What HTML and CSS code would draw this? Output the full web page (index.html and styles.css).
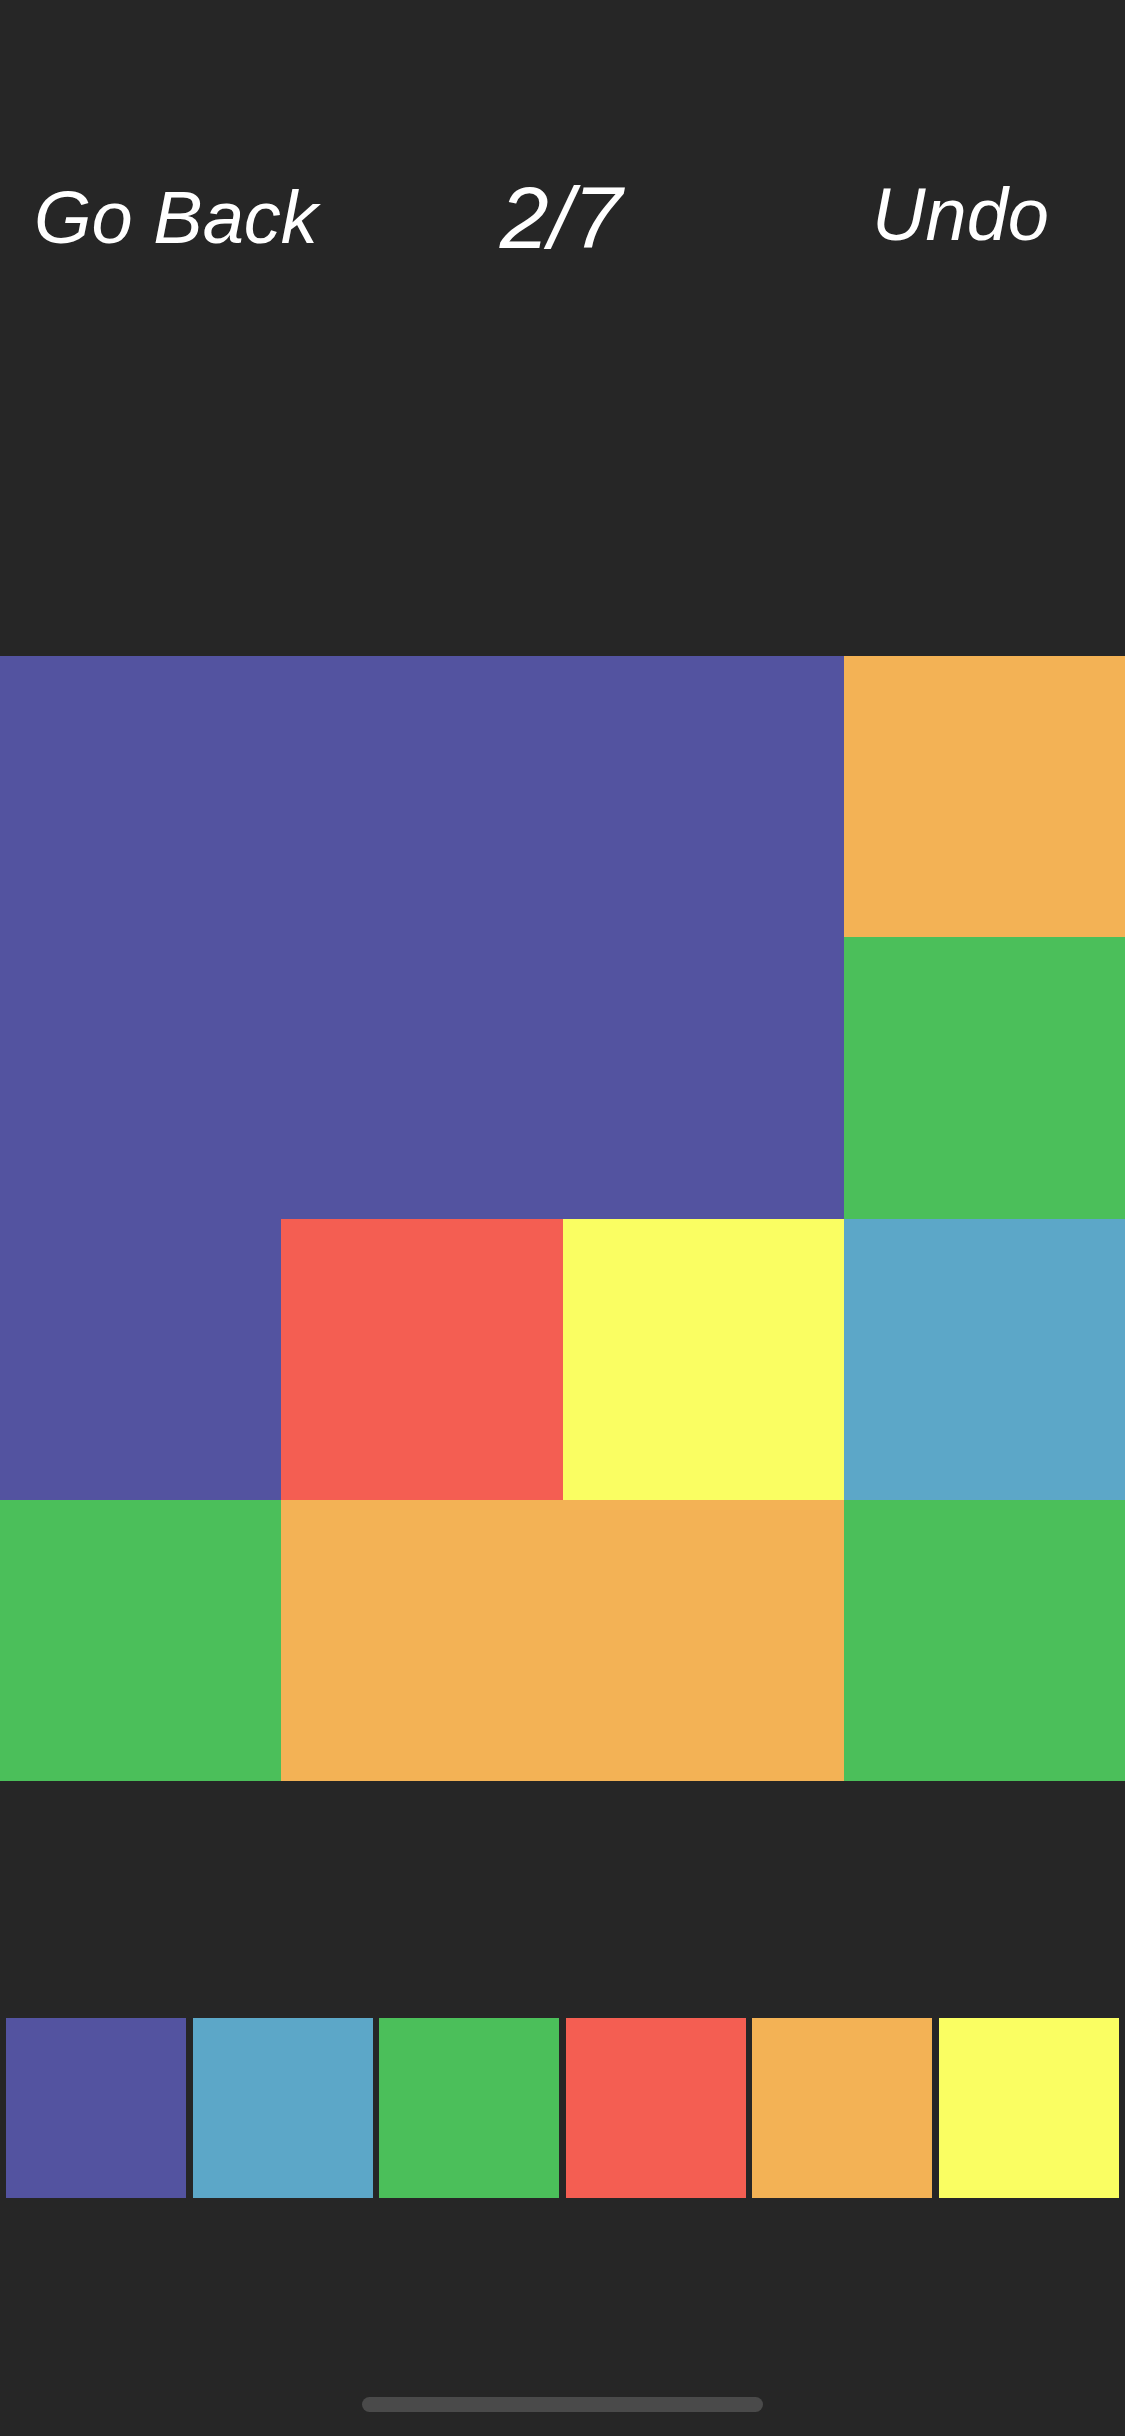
FILE: index.html
```html
<!DOCTYPE html>
<html lang="en">
<head>
<meta charset="utf-8">
<title>Puzzle 2/7</title>
<link rel="stylesheet" href="styles.css">
</head>
<body>
<div class="screen">
  <header class="topbar">
    <div class="btn back">Go Back</div>
    <div class="count">2/7</div>
    <div class="btn undo">Undo</div>
  </header>
  <main class="board">
    <div class="cell purple"></div>
    <div class="cell purple"></div>
    <div class="cell purple"></div>
    <div class="cell orange"></div>
    <div class="cell purple"></div>
    <div class="cell purple"></div>
    <div class="cell purple"></div>
    <div class="cell green"></div>
    <div class="cell purple"></div>
    <div class="cell red"></div>
    <div class="cell yellow"></div>
    <div class="cell blue"></div>
    <div class="cell green"></div>
    <div class="cell orange"></div>
    <div class="cell orange"></div>
    <div class="cell green"></div>
  </main>
  <nav class="palette">
    <div class="swatch purple"></div>
    <div class="swatch blue"></div>
    <div class="swatch green"></div>
    <div class="swatch red"></div>
    <div class="swatch orange"></div>
    <div class="swatch yellow"></div>
  </nav>
  <div class="home-indicator"></div>
</div>
</body>
</html>
```
FILE: styles.css
```css
html, body {
  margin: 0;
  padding: 0;
  background: #262626;
}
.screen {
  width: 1125px;
  height: 2436px;
  overflow: hidden;
  display: flex;
  flex-direction: column;
  align-items: center;
  font-family: "Liberation Sans", Arial, sans-serif;
  color: #ffffff;
}
.topbar {
  width: 100%;
  height: 656px;
  box-sizing: border-box;
  display: grid;
  grid-template-columns: 1fr auto 1fr;
  align-items: start;
}
.btn {
  font-size: 74px;
  line-height: 1;
  font-style: italic;
}
.back {
  justify-self: start;
  margin-left: 34px;
  margin-top: 181px;
}
.undo {
  justify-self: end;
  margin-right: 76px;
  margin-top: 178px;
}
.count {
  font-size: 88px;
  line-height: 1;
  font-style: italic;
  margin-top: 174px;
  margin-left: -3px;
}
.board {
  width: 1125px;
  height: 1125px;
  display: grid;
  grid-template-columns: repeat(4, 1fr);
  grid-template-rows: repeat(4, 1fr);
}
.palette {
  width: 100%;
  margin-top: 237px;
  display: flex;
  justify-content: space-evenly;
}
.swatch {
  width: 180px;
  height: 180px;
}
.purple { background: #5353a0; }
.blue { background: #5ca7c8; }
.green { background: #4bbf5a; }
.red { background: #f45e52; }
.orange { background: #f3b255; }
.yellow { background: #fafe62; }
.home-indicator {
  margin-top: 199px;
  width: 401px;
  height: 15px;
  border-radius: 8px;
  background: #4a4a4a;
}
```
